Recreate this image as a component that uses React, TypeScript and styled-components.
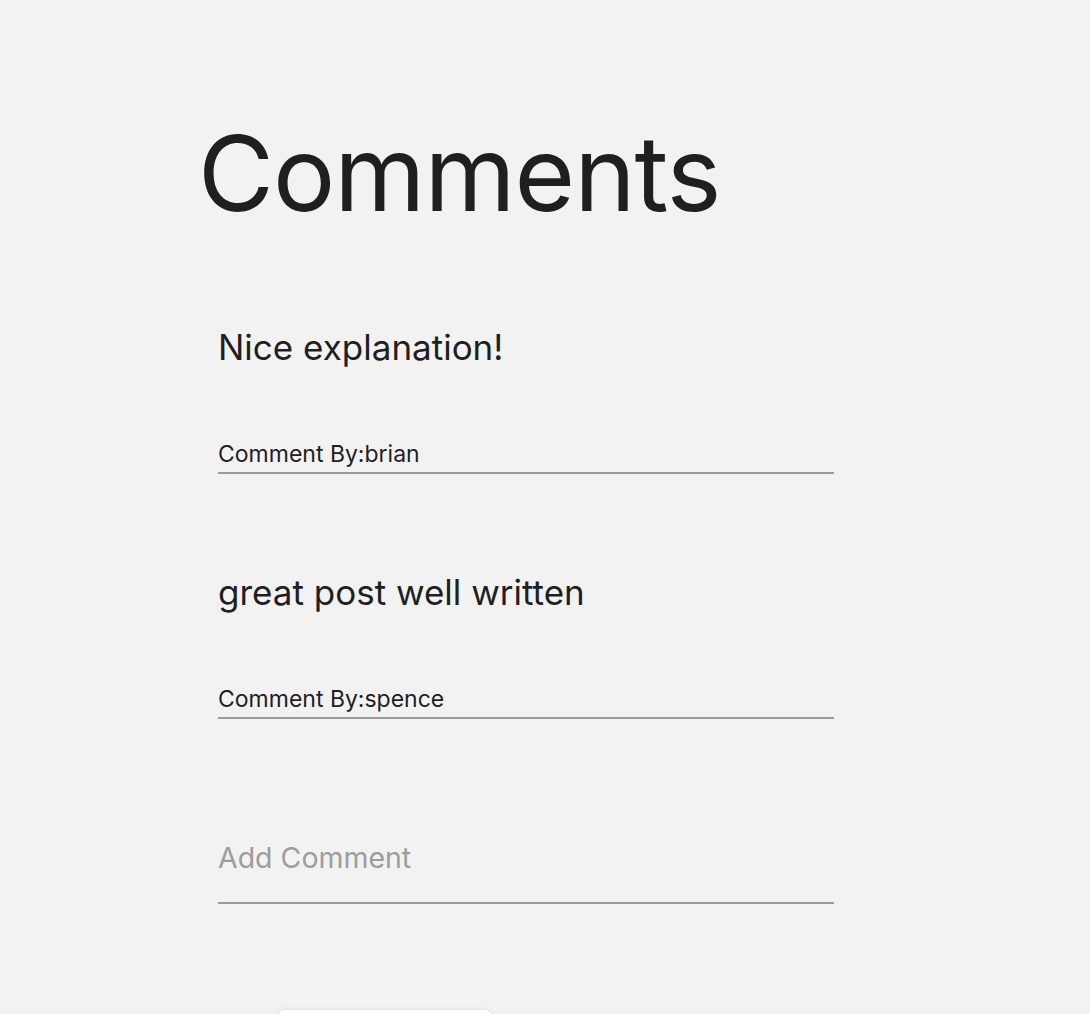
import React, { useState } from 'react';
import styled, { createGlobalStyle } from 'styled-components';

const colors = {
  bg: '#f2f2f2',
  text: '#1f1f1f',
  line: '#9a9a9a',
  placeholder: '#9d9d9d',
  white: '#ffffff'
};

const GlobalStyle = createGlobalStyle`
  html, body {
    margin: 0;
    padding: 0;
    background: ${colors.bg};
  }
  body {
    font-family: Inter, 'Noto Sans', sans-serif;
    color: ${colors.text};
  }
`;

const Page = styled.div`
  min-height: 100vh;
  padding: 116px 0 0 198px;
  box-sizing: border-box;
  overflow: hidden;
`;

const Title = styled.h1`
  margin: 0;
  font-size: 104px;
  font-weight: 400;
  line-height: 1.1;
  letter-spacing: -1px;
`;

const List = styled.div`
  margin-top: 96px;
  padding-left: 20px;
  width: 616px;
  display: flex;
  flex-direction: column;
  gap: 97px;
`;

const CommentCard = styled.div`
  display: flex;
  flex-direction: column;
  border-bottom: 2px solid ${colors.line};
`;

const CommentBody = styled.p`
  margin: 0;
  font-size: 35px;
  line-height: 1.2;
`;

const Author = styled.span`
  margin-top: 72px;
  font-size: 23px;
  line-height: 1.3;
  padding-bottom: 2px;
`;

const Form = styled.form`
  margin-top: 121px;
  padding-left: 20px;
  width: 616px;
  display: flex;
  flex-direction: column;
`;

const Input = styled.input`
  border: none;
  border-bottom: 2px solid ${colors.line};
  background: transparent;
  font-family: inherit;
  font-size: 28.5px;
  padding: 0 0 27px;
  color: ${colors.text};
  outline: none;

  &::placeholder {
    color: ${colors.placeholder};
  }
`;

const SubmitButton = styled.button`
  margin: 106px 0 0 60px;
  width: 213px;
  height: 48px;
  background: ${colors.white};
  border: none;
  border-radius: 6px;
  box-shadow: 0 1px 6px rgba(0, 0, 0, 0.12);
  font-family: inherit;
  font-size: 20px;
  cursor: pointer;
`;

const comments = [
  { id: 1, body: 'Nice explanation!', author: 'brian' },
  { id: 2, body: 'great post well written', author: 'spence' }
];

function App() {
  const [text, setText] = useState('');

  return (
    <Page>
      <GlobalStyle />
      <Title>Comments</Title>
      <List>
        {comments.map((c) => (
          <CommentCard key={c.id}>
            <CommentBody>{c.body}</CommentBody>
            <Author>Comment By:{c.author}</Author>
          </CommentCard>
        ))}
      </List>
      <Form onSubmit={(e) => e.preventDefault()}>
        <Input
          placeholder="Add Comment"
          value={text}
          onChange={(e) => setText(e.target.value)}
        />
        <SubmitButton type="submit">Submit</SubmitButton>
      </Form>
    </Page>
  );
}

export default App;
